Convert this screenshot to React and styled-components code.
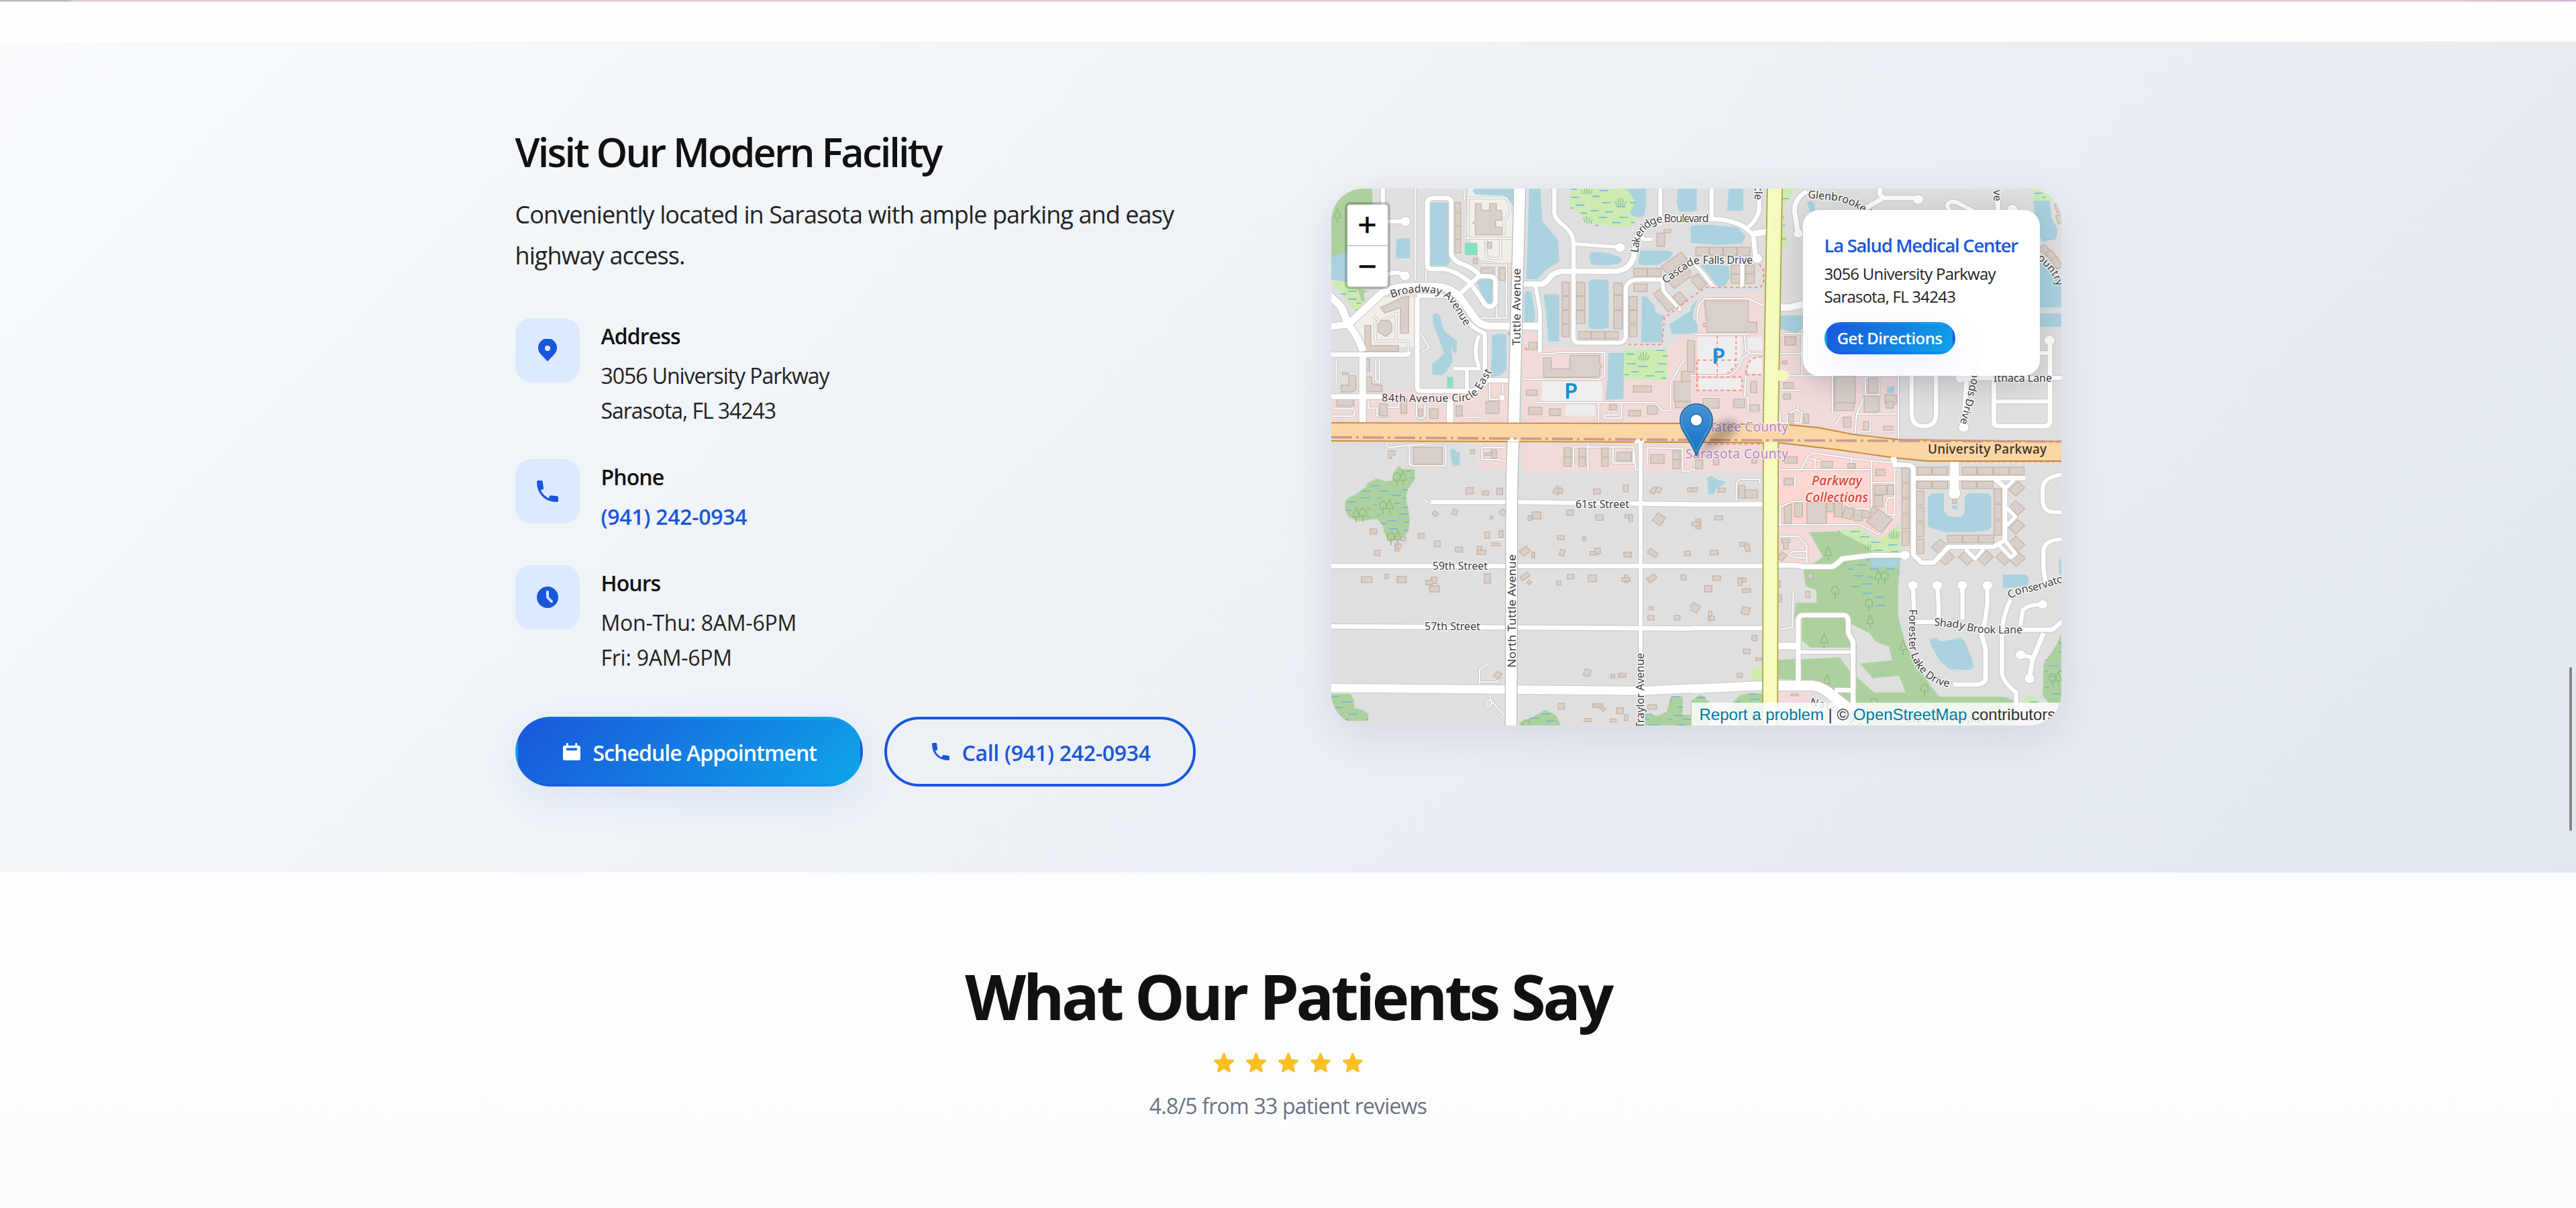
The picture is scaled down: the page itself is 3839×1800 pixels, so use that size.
import React from 'react'
import styled, { createGlobalStyle, css } from 'styled-components'

const LAND = {
    wood: '#add19e',
    marsh: '#cdebb0',
    water: '#aad3df',
    school: '#f2efe9',
    shops: '#f2dad9',
    mall: '#ffd6d1',
    plain: '#e0dfdf',
    pitch: '#88e0be',
    parking: '#eeeeee',
}

// Every tile keeps its own drawing units, [x, y, w, h] places it on the map
const tiles = [
    {
        id: 'nw',
        place: [-14, -11, 560, 400],
        box: '0 0 1568 1200',
        areas: [
            ['wood', 'M39 33H208L212 80 203 180 195 260 130 310 39 345Z'],
            ['water', 'M39 345Q70 322 105 320V450L39 440Z'],
            ['marsh', 'M39 445L100 450 160 480 150 500 172 545 160 580 135 580 90 510Z'],
            ['wood', 'M150 480L200 490 175 500 178 540 165 535Z'],
            ['school', 'M612 33H805V360L750 365 660 350 640 300 600 240 605 130Z'],
            ['school', 'M240 520H385V740L200 745 175 740 130 650Z'],
            ['shops', 'M838 680H905L910 745 1190 750 1195 770 1185 975H1258L1262 890 1440 890 1445 745 1490 690 1568 682V1085H838Z'],
            ['shops', 'M39 970H240L250 940 380 935 640 960 700 905H780V1082H39Z'],
            ['water', 'M312 262L330 255 368 255V345H308Z'],
            ['water', 'M628 40L640 34H800V120L780 80 760 65 640 60Z'],
            ['water', 'M450 95H525Q535 110 530 180V330L540 350 525 378H450Z'],
            ['water', 'M865 33H912L920 180 985 260 990 360 935 395 900 438H853Z'],
            ['water', 'M845 500L860 490 875 495 890 600 885 630H845Z'],
            ['water', 'M645 445Q690 435 714 440L710 545H690L660 490Z'],
            ['water', 'M925 505H990V717H945L935 580Z'],
            ['water', 'M1113 450L1125 440H1190L1197 450V650L1180 660H1120L1113 650Z'],
            ['water', 'M1120 318Q1180 310 1240 338L1256 350 1236 370 1176 378 1125 373 1115 345Z'],
            ['water', 'M1328 310H1440L1467 320 1450 345 1400 375 1330 375 1320 365Z'],
            ['water', 'M1335 515H1355L1390 560V580L1405 595 1433 600 1418 635 1423 695 1410 720H1333Z'],
            ['water', 'M1450 640L1568 560V682H1490L1460 685Z'],
            ['water', 'M462 600Q480 580 492 600L510 670 565 715 562 770 550 765 540 730 545 810 520 850 500 868 462 865 458 820 490 790 510 770 490 710 465 640Z'],
            ['water', 'M710 690L740 680 770 685V845L740 870 705 875Z'],
            ['water', 'M1195 768H1263L1258 973 1183 978 1193 878Z'],
            ['water', 'M1270 33H1351V120L1345 155 1320 163 1290 153 1280 120Z'],
            ['water', 'M1485 33H1568V138L1488 135 1480 90Z'],
            ['water', 'M1540 195H1568V285L1538 275Z'],
            ['marsh', 'M1040 33H1270L1308 90 1290 130 1280 145 1310 165 1300 200 1240 205 1130 190 1085 155 1030 110Z'],
            ['marsh', 'M1262 752H1443L1440 890 1330 885 1258 880Z'],
            ['pitch', 'M597 275H649V330H597ZM522 875H548V923H522Z'],
            ['parking', 'M918 895H1170V983H918ZM1018 998H1140V1048H1018Z'],
        ],
        ripples: 'M78 504h26M110 492h36M108 527h36M145 546h18M140 576h18M1040 36h24M1160 42h34M1040 72h34M1130 68h30M1060 107h36M1170 96h36M1285 96h24M1230 114h36M1120 132h36M1035 120h12M1180 137h34M1080 143h28M1155 162h36M1240 162h36M1140 198h16M1210 185h36M1290 185h16M1274 773h30M1395 756h36M1422 782h20M1272 816h38M1402 816h36M1320 828h38M1290 852h32M1390 852h36M1262 864h20M1350 870h36M1415 880h22',
        grass: 'M1090 58l-6-18M1098 58l-3-26M1105 58v-28M1112 58l4-28M1120 58l8-20M1230 110l-6-20M1238 112l-4-34M1246 112v-40M1254 112l4-34M1262 110l8-22M1098 185l-6-22M1106 188l-3-32M1114 188l2-26M1122 190l6-20M1326 800l-6-20M1334 802l-4-34M1342 802v-40M1350 802l4-34M1358 800l8-22',
        lanes: 'M390 33V440M435 380V470M595 40V90M610 75H770L785 110V140L760 170V255H610ZM785 140H805M600 255H805M685 260V325Q690 345 710 345H745V262M730 380V610M590 530Q605 590 640 612H770V375H665M220 640L310 590V715H225ZM300 715H360V770M215 600L250 640M225 800V890L240 902V800M412 680L448 745 412 768M838 885H1160L1180 870V765H990L960 772 910 770M890 990H1390L1420 1025H1455V900L1510 800M1155 990V1080M1250 990V1060H1180V1045H1235M195 985V1015H230V1050H270V1010H320V990M50 1018H130V980M45 1050H135V1020M395 990V1050L412 1062 430 1050V1000M600 1055H670M700 905V975H755M755 905V950M60 790V900',
        streets: [
            ['M255 33V110', 18],
            ['M270 180H348M270 420Q310 395 347 423', 18],
            ['M655 430V420Q645 395 590 372Q545 355 540 325V100Q540 75 515 75H465Q440 75 440 100V375Q440 393 460 393H510Q560 400 620 455L680 550Q700 570 718 553L725 540V450Q725 430 705 425H655L580 500', 20],
            ['M20 500L80 560 110 640L250 500Q300 470 380 470H480Q555 478 590 540L640 615Q660 645 700 648H905', 32],
            ['M20 652L110 640Q150 690 172 760', 30],
            ['M20 775H350Q362 775 362 762', 20],
            ['M170 770V1082M535 975V1082', 28],
            ['M20 963H260', 22],
            ['M398 520V920Q398 938 415 938H620Q660 930 690 890H800', 20],
            ['M398 512H500Q560 520 590 600Q620 655 680 680V890', 18],
            ['M655 690Q630 760 655 830M550 838H660M605 838V930', 16],
            ['M838 460H920Q940 450 955 425Q975 405 1010 403H1225Q1290 395 1303 330L1310 260Q1330 190 1420 170H1568', 24],
            ['M970 33V145Q975 170 1005 195Q1050 230 1050 280V700Q1050 722 1075 722H1240Q1268 720 1268 690V480Q1275 440 1320 440H1420', 18],
            ['M1050 280L1245 295M1330 225L1340 260H1380', 16],
            ['M892 470L910 580V765', 16],
            ['M1412 33V195', 16],
            ['M1420 440L1425 490 1495 575', 16],
        ],
        ends: [[348, 180, 20], [347, 423, 20], [1245, 297, 20], [752, 967, 12]],
        walks: 'M1568 500L1430 610 1418 730H1280M1555 740V1085M848 745l12 14M838 1085H1568M780 675V690',
        blocks: [
            [555, 95, 24, 45], [555, 140, 24, 60], [555, 200, 24, 60], [555, 260, 24, 60],
            [1002, 452, 30, 60], [1002, 515, 30, 60], [1002, 578, 30, 60], [1002, 640, 30, 55],
            [1062, 452, 35, 60], [1062, 515, 35, 60], [1062, 578, 35, 58],
            [1072, 672, 52, 33], [1126, 672, 54, 33], [1183, 672, 54, 33],
            [1218, 455, 35, 52], [1218, 510, 35, 65], [1218, 578, 35, 82],
            [1283, 515, 32, 60], [1283, 578, 32, 55], [1283, 640, 32, 55],
            [1302, 390, 55, 35], [1360, 390, 55, 35], [1302, 460, 55, 33],
            [663, 388, 53, 24], [740, 388, 26, 55], [690, 272, 18, 28], [633, 345, 16, 25],
            [685, 985, 54, 53], [560, 1005, 25, 45], [450, 1018, 35, 42], [403, 1018, 16, 33],
            [330, 975, 24, 63], [240, 995, 32, 54], [62, 975, 70, 30], [862, 1010, 55, 33],
            [950, 1018, 45, 30], [1300, 915, 75, 28], [1200, 1000, 30, 22], [1280, 1025, 50, 25],
            [1358, 1005, 42, 36], [1470, 895, 98, 90], [1500, 850, 68, 45], [1525, 712, 30, 140],
            [1475, 985, 80, 28], [853, 933, 45, 25], [863, 720, 35, 32], [1398, 232, 33, 60],
            [1428, 215, 28, 16], [183, 795, 16, 55], [85, 855, 25, 10],
            [1418, 345, 105, 42, -38], [1448, 415, 100, 38, -38], [1378, 515, 100, 36, 52],
            [1470, 505, 48, 38, 50], [1555, 410, 40, 60],
        ],
        shapes: 'M640 100h25v30h35v-30h28v30h22v45h-25v30h25v35H640v-45l-10-8 10-8ZM925 790h32v48h78v-60h125v40l8 10-8 10v32l-12 6H925ZM245 565L335 520 362 515V680H328V565L262 590ZM180 645h24v90h115v25H180ZM235 640l15-18h30l12 20v30l-25 22-32-20ZM112 870h30v60l-15 12H80v-30h32ZM183 875h25v30l42 8v28h-68Z',
        trees: [[65, 155]],
    },
    {
        id: 'ne',
        place: [536, -11, 570, 400],
        box: '0 0 1568 1200',
        areas: [
            ['water', 'M0 33H24V130L0 138ZM155 33H215V133H148Z'],
            ['water', 'M0 200Q60 190 120 200L190 205 225 245 210 280 100 285 0 275Z'],
            ['water', 'M40 375Q100 365 155 380L160 430 140 470H110L75 420Z'],
            ['shops', 'M0 680L30 640 20 590 60 510 295 500V1180H0Z'],
            ['water', 'M0 560L30 525 10 580 8 610 28 640V675L0 682Z'],
            ['shops', 'M365 665L430 680 460 650V660H850V1160H365Z'],
            ['water', 'M365 600H470V650L430 678 365 660Z'],
            ['water', 'M475 95Q490 80 505 100L510 140H490Z'],
            ['marsh', 'M378 33H432L398 90 375 120V290L395 295 400 270 385 230Z'],
            ['marsh', 'M1405 33H1480L1490 87H1405Z'],
            ['water', 'M1405 87H1472L1478 160 1505 220 1495 260 1440 270 1410 200Z'],
            ['water', 'M1425 360L1480 400 1518 450V565H1425ZM1425 592H1530V650H1425ZM805 920l30-5v32h-32Z'],
            ['parking', 'M28 695H208V800L150 860H28ZM232 698H292V755H232ZM245 790H292V860H230ZM32 882H210V932H32Z'],
        ],
        ripples: 'M372 78h30M372 162h10M375 198h12M370 258h20M1410 54h30M1440 72h14M1460 54h8',
        lanes: 'M20 685H230L245 660M220 690L225 755 245 770H295M365 770H455M365 870H455V785M225 870L220 960 235 970V1030H295M25 610L30 560 55 525H235L295 555M40 965H130M0 870H150Q200 850 210 790L240 770M365 690L385 682H455V870H850V1155M580 870V1035M672 1130L680 1040 715 955V880H770V955H712M770 955V1040H845M680 1040H770M370 935H450M365 1035V1080H450L455 1035 430 1020 395 1045V1080M440 1020V1000M590 1090L620 1040M700 1120H735V1060M785 1120H830V1090',
        streets: [
            ['M85 33V170', 18],
            ['M-10 170H110Q170 175 220 205L255 240 265 340', 20],
            ['M235 205Q285 160 280 100V33', 18],
            ['M255 235L315 225', 28],
            ['M0 350L40 400 95 475M210 370V475', 16],
            ['M475 45Q420 80 425 140L440 235', 20],
            ['M690 135L790 75 930 75M775 33V60L790 75', 20],
            ['M1065 140L1050 110Q1055 85 1090 95L1160 135', 18],
            ['M1258 80V140', 20],
            ['M360 565H400L460 550', 30],
            ['M905 860V1040Q905 1095 955 1095Q1005 1095 1005 1040V860', 18],
            ['M1100 880H1240M1130 880L1118 1100M1242 880V1075Q1242 1095 1265 1095H1450Q1472 1095 1472 1075V715', 20],
            ['M1242 985H1470M1242 880H1530M1430 768H1470', 18],
        ],
        ends: [[272, 345, 20], [440, 235, 18], [932, 82, 20], [1318, 125, 20], [1105, 880, 20], [1118, 1100, 20], [1470, 712, 21]],
        walks: 'M0 520L60 475H285L298 450V400L280 370M108 690V870M185 690V820L150 860M25 800H200M20 875H210V935H25V800M225 860Q230 780 295 785M225 865H295',
        blocks: [
            [20, 295, 54, 38], [76, 295, 54, 38], [134, 295, 54, 38], [190, 295, 52, 38],
            [165, 375, 35, 40], [165, 415, 35, 42], [225, 375, 35, 40], [225, 415, 35, 42],
            [245, 895, 25, 50], [50, 970, 65, 45], [175, 975, 45, 38], [240, 1000, 40, 28],
            [385, 695, 45, 38], [380, 952, 28, 22], [380, 900, 40, 25], [400, 1040, 20, 40],
            [463, 1042, 20, 40], [588, 870, 85, 125], [588, 990, 80, 35], [727, 880, 40, 68],
            [710, 960, 60, 72], [795, 955, 48, 40], [800, 985, 30, 30], [625, 1055, 30, 45], [708, 1075, 22, 40],
            [790, 1095, 38, 20], [-10, 715, 25, 140], [375, 803, 18, 14],
            [0, 430, 60, 40, 50], [1440, 285, 28, 50, -45], [1465, 310, 28, 50, -35],
            [1485, 340, 28, 50, -30], [1495, 100, 22, 40, -20], [1500, 150, 22, 40, -15],
        ],
        shapes: 'M55 535H235V630H270V675H65V650H50V635H65Z',
        trees: [],
    },
    {
        id: 'sw',
        place: [-14, 379, 560, 440],
        box: '0 0 1568 1320',
        areas: [
            ['shops', 'M650 0H770V118H650ZM835 0H1568V130H835Z'],
            ['water', 'M535 32L550 25 562 40H577L574 100 548 105 540 80Z'],
            ['wood', 'M97 265Q100 245 140 230L180 200 190 180 230 158 265 172 295 168 300 130 320 102 335 118H387V165L360 205 350 240 368 340 362 390 335 435H275L258 395 255 370 230 340 150 350 110 330 97 295Z'],
            ['wood', 'M30 1122H120L135 1150V1185L175 1195 195 1215 192 1243H100L30 1262Z'],
            ['wood', 'M825 1250L880 1225 935 1192 980 1220 1002 1275H825Z'],
            ['wood', 'M1348 1205L1400 1220 1440 1200 1455 1135H1505V1215H1568V1275H1348ZM1548 1160V1145L1568 1135V1160Z'],
        ],
        ripples: 'M352 126h18M374 156h12M202 192h40M166 216h36M240 216h40M336 210h22M290 234h40M162 246h40M230 246h18M340 246h12M104 264h42M302 270h28M218 276h12M100 300h28M190 294h12M336 288h22M320 318h38M190 330h10M230 324h14M274 348h40M246 360h24M342 354h22M280 384h38M342 390h14M40 1134h28M84 1158h40M52 1182h38M112 1212h38M184 1236h8M96 1236h14M918 1212h34M868 1230h40M936 1242h36M1460 1134h36M1450 1152h12M1484 1182h24M1366 1212h12M1468 1218h38M1350 1236h14M1446 1236h16M1508 1236h40M1366 1260h40M1480 1260h36',
        lanes: 'M270 0V14L285 20 365 10V95Q375 103 390 103H510Q518 100 518 85V10M360 12L430 5M668 20V75H735L770 85M668 20H760M1050 110V18H1300L1310 120H1330M1215 20V90H1300V30M1110 0V125M1357 95V22L1505 25V125H1550V20M658 1080V1015L700 980M658 1068H730L745 1042H770M700 1120L705 1150 770 1228M705 1150Q680 1150 688 1175Q705 1180 710 1160M710 435L740 430 770 437M425 255L450 268',
        streets: [
            ['M455 264H780L1570 275', 20],
            ['M20 550H1570', 20],
            ['M20 820L1570 830', 20],
            ['M20 1095L800 1103 1340 1108 1570 1095', 38],
            ['M1330 0V1275', 16],
        ],
        ends: [],
        walks: '',
        blocks: [
            [382, 20, 120, 75], [620, 30, 16, 18], [707, 32, 22, 36], [680, 44, 30, 12],
            [1010, 22, 30, 42], [1010, 64, 30, 40], [1072, 22, 28, 42], [1072, 64, 28, 40],
            [1167, 22, 28, 42], [1167, 64, 28, 40], [1232, 42, 60, 38], [1372, 52, 56, 40],
            [1465, 35, 30, 40], [1465, 75, 30, 40],
            [602, 200, 30, 28], [670, 215, 26, 18], [730, 202, 24, 28], [1134, 206, 28, 22],
            [1258, 188, 20, 30], [1526, 200, 40, 18], [970, 195, 24, 34, 30], [985, 205, 20, 20],
            [1375, 198, 20, 30, 40], [1395, 198, 20, 24, 20],
            [463, 308, 20, 18, 45], [545, 298, 20, 24, 20], [742, 300, 24, 22, 45], [702, 328, 12, 12],
            [878, 308, 36, 32], [860, 325, 14, 22], [1022, 300, 26, 24], [1142, 322, 32, 24], [1265, 320, 30, 16],
            [1282, 320, 14, 32], [1387, 320, 40, 42, 35], [1545, 355, 24, 24],
            [202, 384, 28, 22], [402, 404, 24, 22], [332, 420, 18, 18], [305, 445, 16, 38], [312, 452, 20, 18],
            [220, 480, 22, 24], [468, 438, 26, 26], [557, 466, 30, 22], [648, 462, 18, 36], [650, 480, 34, 18],
            [680, 398, 20, 28], [740, 392, 16, 30], [710, 447, 32, 12],
            [983, 414, 28, 18], [1088, 418, 12, 20], [828, 470, 38, 28, -40], [876, 488, 12, 26],
            [992, 478, 20, 26, 20], [1118, 485, 34, 16], [1140, 470, 22, 24], [1260, 488, 32, 22],
            [1360, 482, 42, 20, 35], [1514, 484, 24, 20],
            [165, 598, 44, 26], [263, 587, 14, 20], [314, 596, 38, 28], [455, 600, 24, 28], [434, 614, 28, 20],
            [450, 638, 40, 28], [678, 585, 26, 42], [828, 586, 38, 20, -35], [858, 616, 14, 14, 45],
            [980, 618, 18, 18], [1024, 588, 28, 20], [1112, 590, 34, 30], [1262, 590, 14, 34], [1252, 602, 34, 16],
            [1358, 594, 38, 22, -38], [1498, 590, 22, 22],
            [1366, 732, 18, 14], [1360, 772, 26, 20], [1470, 772, 24, 20], [1540, 715, 28, 36],
            [722, 1024, 24, 28, 40], [1094, 1012, 26, 30, 15], [1206, 1036, 16, 14], [1238, 1030, 30, 18],
            [986, 1164, 26, 26], [1130, 1166, 40, 16], [1160, 1180, 22, 14, 45], [1230, 1184, 28, 26], [1262, 1215, 16, 26],
            [1094, 1232, 30, 14], [1202, 1234, 26, 14], [1360, 1170, 36, 20],
        ],
        shapes: 'M278 35H305V55H292V70H278Z',
        trees: [[338, 158], [283, 285], [143, 322], [317, 425]],
        rounds: [[312, 158], [255, 285], [171, 318], [288, 425], [852, 1262]],
    },
    {
        id: 'se',
        place: [536, 379, 570, 440],
        box: '0 0 1568 1320',
        areas: [
            ['shops', 'M0 0H295V130H0Z'],
            ['shops', 'M355 5L640 35 835 70 850 100 860 360 770 435 700 380 485 400 540 500 475 540H355Z'],
            ['mall', 'M365 20L650 55 835 85V325L770 410 690 365H365Z'],
            ['wood', 'M485 400L610 395 720 400 860 500 850 640V780L880 900 930 1000 985 1090 1020 1135H1290L1330 1155V1275H650L590 1110 440 1060 355 1055V970L430 965 418 840 430 715H515V660L470 640 462 570 540 510Z'],
            ['plain', 'M418 785H455V960H418ZM640 800L730 850 760 890 812 910 825 972 700 985 745 1052 853 1040 880 1115H750L680 1045V900ZM440 915H670V1050L610 958 440 968ZM455 885L490 915H455Z'],
            ['wood', 'M693 988L780 978 745 1052 720 1020Z'],
            ['marsh', 'M605 395L690 380 770 435 857 362V488H750L710 455Z'],
            ['water', 'M735 518H858V555H745Z'],
            ['water', 'M65 155L85 148 110 165 142 172 132 188 107 200 92 228H72Z'],
            ['water', 'M972 240L987 225H1037V295Q1042 328 1070 330H1110Q1122 320 1122 290V245L1137 225H1217L1231 240V378L1215 392 1140 398H1040L972 375Z'],
            ['water', 'M975 875L1005 872 1025 888 1105 870 1122 885 1150 960 1161 1000 1145 1015 1060 1012 1025 980 990 920Z'],
            ['water', 'M1278 588H1375L1385 605 1380 640 1278 650ZM1508 520H1518V590H1510ZM1070 280h24v16h-24Z'],
            ['wood', 'M1518 850L1500 900 1445 990 1442 1130 1475 1175H1518Z'],
            ['marsh', 'M1350 1165L1370 1138 1400 1125 1440 1165ZM248 1010L293 998V1062H248Z'],
            ['wood', 'M-10 1160L40 1125 78 1160 75 1275H-10ZM170 1160L205 1125 295 1118V1275H200Z'],
            ['shops', 'M355 1112H480L495 1140 420 1175H355Z'],
        ],
        ripples: 'M604 396h8M654 396h38M694 420h38M738 444h36M808 456h38M748 480h38M820 486h32M720 522h16M626 540h12M682 546h38M640 564h22M732 564h38M798 564h38M848 580h6M666 594h38M726 600h22M704 630h38M656 642h36M704 672h38M754 690h38M758 726h40M1506 894h12M1508 936h10M1452 972h10M1468 996h38M1450 1020h14M1508 1020h10M1470 1044h24M1450 1092h18M1480 1122h36M1388 1158h36M24 1138h36M236 1122h36M242 1146h38M186 1158h18',
        grass: 'M818 425l-6-18M825 428l-4-32M832 428v-38M840 428l4-32M848 425l5-22M718 478l-4-20M726 480v-34M732 478l5-24',
        lanes: 'M0 120H15V80M185 260L188 175 200 162H280L285 185M190 262H285M355 120H740V80L835 90M740 120V290M835 85V325L770 410 690 365H355M740 178H835M800 320V265L810 245H835M800 320H835M365 370V285L420 262 620 260 660 295H740M450 120L480 60 500 45 660 70 740 80M508 70V118M478 65L540 85V100M658 70V90M427 145V210M360 418H440L475 460V540M475 485H420Q405 490 405 500Q410 515 475 515M420 665L415 825 355 835',
        streets: [
            ['M-10 275H295M-10 550H295M-10 828H295', 20],
            ['M-10 1100L295 1085', 40],
            ['M355 1085H500Q540 1090 580 1130L650 1190', 44],
            ['M590 1105H660', 20],
            ['M355 908H440', 30],
            ['M440 1070V785Q445 770 460 770H630Q645 775 645 800V850L665 890V1200', 20],
            ['M440 935H660', 16],
            ['M355 547H430L460 553H580Q595 545 620 518L740 502H870', 22],
            ['M835 70V98H885Q912 100 912 125V500L945 535H995L1055 465H1240L1287 435V200L1245 160', 20],
            ['M912 157H1370', 20],
            ['M1080 80V225', 38],
            ['M1287 205L1325 165M1295 290L1330 330 1295 370M1287 435L1330 495 1312 512 1262 455M1125 475L1165 518 1200 475', 16],
            ['M1530 140Q1445 150 1442 200V260Q1445 310 1490 310H1530', 18],
            ['M1530 430Q1450 430 1445 480V560L1455 630', 18],
            ['M910 640L915 760M1010 640L1015 720V780M1113 640V790M1215 640V720L1205 800', 18],
            ['M920 800H1010M1205 800L1192 860 1208 920V1050Q1205 1080 1170 1080H1075', 20],
            ['M1310 700Q1275 780 1275 860V1030Q1280 1070 1333 1115V1175', 18],
            ['M1350 820L1360 750Q1370 725 1440 722M1352 947L1400 960', 18],
            ['M1300 835H1480Q1500 820 1530 790M1445 850L1400 970 1388 1050', 20],
        ],
        ends: [[877, 502, 20], [1080, 225, 24], [910, 637, 20], [1010, 637, 20], [1113, 637, 20], [1215, 637, 20], [1442, 722, 19], [1388, 1053, 20], [1352, 947, 20]],
        walks: 'M70 5H295M1105 84H1530',
        blocks: [
            [18, 75, 30, 40], [92, 68, 22, 30], [250, 68, 20, 22], [385, 62, 50, 28], [535, 82, 45, 28], [643, 92, 32, 20],
            [757, 118, 38, 28], [382, 158, 36, 30], [425, 268, 32, 62], [475, 268, 80, 92], [556, 268, 30, 40],
            [588, 268, 32, 62], [668, 300, 36, 48], [752, 190, 50, 42], [805, 188, 26, 42], [752, 235, 34, 50],
            [700, 305, 36, 30, 20], [735, 310, 75, 75, 38], [625, 290, 40, 48, 15], [738, 288, 24, 22, 40],
            [927, 108, 60, 35], [990, 108, 62, 35], [1112, 108, 58, 35], [1174, 108, 64, 35], [1240, 108, 64, 35], [1306, 108, 60, 35],
            [927, 172, 60, 32], [990, 172, 62, 32], [1112, 172, 58, 32], [1174, 172, 64, 32],
            [865, 112, 30, 62], [865, 180, 30, 64], [865, 250, 30, 64], [865, 322, 30, 62], [865, 394, 30, 64],
            [925, 215, 30, 64], [925, 288, 30, 62], [925, 358, 30, 62], [925, 430, 30, 64],
            [1243, 205, 30, 64], [1243, 275, 30, 66], [1243, 348, 30, 64],
            [1052, 412, 60, 34], [1115, 412, 62, 34], [1180, 412, 62, 34],
            [1310, 185, 52, 40, -45], [1310, 270, 52, 40, 45], [1310, 355, 52, 40, -45], [1310, 430, 52, 40, 45], [1312, 500, 52, 40, -45],
            [992, 442, 52, 40, -45], [1022, 494, 52, 40, -45], [1102, 494, 52, 40, 45], [1182, 494, 52, 40, -45], [1256, 494, 52, 40, 45],
            [2, 200, 24, 18], [112, 202, 28, 18], [195, 190, 26, 56], [222, 210, 50, 36],
            [98, 326, 32, 18], [20, 340, 20, 44], [5, 354, 30, 18], [200, 445, 28, 16], [222, 452, 18, 34, -15], [78, 480, 34, 20],
            [88, 594, 34, 20], [56, 638, 30, 28], [194, 604, 32, 18], [194, 604, 16, 34], [210, 652, 34, 16],
            [0, 720, 34, 34, 30], [208, 734, 32, 32, 15], [72, 752, 14, 42], [76, 774, 20, 20],
            [250, 860, 20, 24], [214, 922, 28, 20], [266, 960, 24, 12], [190, 1030, 20, 18],
            [372, 430, 34, 16], [380, 445, 18, 30], [360, 490, 26, 34, 35], [482, 584, 16, 22], [470, 664, 18, 26],
            [355, 615, 12, 28], [355, 680, 16, 30], [410, 1122, 30, 8], [1073, 252, 16, 18],
        ],
        shapes: 'M382 290L412 270V360H382Z',
        trees: [[563, 495], [546, 885], [735, 800], [768, 600], [870, 915], [558, 1068], [1506, 1055]],
        rounds: [[591, 665], [794, 600], [730, 722], [958, 1102], [1483, 1055], [750, 1165]],
    },
]

// id, baseline, width, text
const curvedLabels = [
    ['broadway', 'M90 163Q115 153 143 155T180 174L201 208', 134, 'Broadway Avenue'],
    ['circle', 'M75 317Q140 319 198 317Q214 313 222 302L240 272', 186, '84th Avenue Circle East'],
    ['lakeridge', 'M457 96L460 76Q467 57 487 51L500 50H570', 134, 'Lakeridge Boulevard'],
    ['cascade', 'M498 142L533 117Q541 112 552 112H630', 139, 'Cascade Falls Drive'],
    ['glenbrooke', 'M710 14L752 18Q775 22 796 38L812 50', 110, 'Glenbrooke Dr'],
    ['country', 'M1043 99Q1064 112 1076 132L1084 150', 62, 'Country'],
    ['woods', 'M954 258V285L936 354', 94, 'Woods Drive'],
    ['forester', 'M861 627V680Q864 705 880 722Q898 742 932 744', 146, 'Forester Lake Drive'],
    ['shady', 'M898 651L936 655Q955 662 985 663H1036', 133, 'Shady Brook Lane'],
    ['conserve', 'M1013 612Q1022 602 1048 600L1110 580', 98, 'Conservatory'],
    ['nature', 'M713 770L745 777 800 815', 100, 'Nature Encl'],
]

// x, y, turn, width, text, size
const straightLabels = [
    [282, 234, -90, 115, 'Tuttle Avenue', 17],
    [275, 714, -90, 169, 'North Tuttle Avenue', 17],
    [466, 804, -90, 112, 'Traylor Avenue', 16],
    [364, 476, 0, 80, '61st Street', 16],
    [151, 568, 0, 82, '59th Street', 16],
    [139, 658, 0, 83, '57th Street', 16],
    [987, 288, 0, 87, 'Ithaca Lane', 16],
    [631, -23, 90, 40, 'Circle', 16],
    [987, -21, 90, 40, 'Drive', 16],
    [858, 796, 0, 110, 'DeSoto Road', 17],
]

const Tile = ({ tile }) => {
    const [x, y, w, h] = tile.place
    return (
        <svg x={x} y={y} width={w} height={h} viewBox={tile.box} preserveAspectRatio="none">
            <rect width="1568" height="1320" fill={LAND.plain} />
            {tile.areas.map(([kind, d], i) => <path key={i} d={d} fill={LAND[kind]} />)}
            <path d={tile.ripples} stroke="#6cb4e0" strokeWidth="5" fill="none" />
            {tile.grass && <path d={tile.grass} stroke="#8dc491" strokeWidth="4" fill="none" />}
            {tile.trees.map(([tx, ty], i) => (
                <path key={i} d={`M${tx} ${ty - 32}l-15 40h30ZM${tx} ${ty + 8}v25`} fill="none" stroke="#8fb982" strokeWidth="4" />
            ))}
            {(tile.rounds || []).map(([tx, ty], i) => (
                <path key={i} d={`M${tx} ${ty - 24}c-20 4-20 36 0 38c20-2 20-34 0-38M${tx} ${ty}v34`} fill="none" stroke="#8fb982" strokeWidth="4" />
            ))}
            <path d={tile.lanes} fill="none" stroke="#c9c5c3" strokeWidth="12" strokeLinejoin="round" />
            <path d={tile.lanes} fill="none" stroke="#fbfbfb" strokeWidth="6" strokeLinejoin="round" />
            <g fill="#d9d0c9" stroke="#c7b5a8" strokeWidth="4">
                {tile.blocks.map(([bx, by, bw, bh, turn], i) => (
                    <rect key={i} x={bx} y={by} width={bw} height={bh} transform={turn ? `rotate(${turn} ${bx + bw / 2} ${by + bh / 2})` : undefined} />
                ))}
                <path d={tile.shapes} />
            </g>
            <g fill="none" stroke="#cbc8c6" strokeLinejoin="round">
                {tile.streets.map(([d, size], i) => <path key={i} d={d} strokeWidth={size + 6} />)}
                {tile.ends.map(([cx, cy, r], i) => <circle key={i} cx={cx} cy={cy} r={r + 1} strokeWidth="4" />)}
            </g>
            <g fill="none" stroke="#fff" strokeLinejoin="round">
                {tile.streets.map(([d, size], i) => <path key={i} d={d} strokeWidth={size} />)}
                {tile.ends.map(([cx, cy, r], i) => <circle key={i} cx={cx} cy={cy} r={r} fill="#fff" stroke="none" />)}
            </g>
            <path d={tile.walks} fill="none" stroke="#fa8376" strokeWidth="5" strokeDasharray="13 12" />
        </svg>
    )
}

const StreetMap = () => (
    <MapCanvas viewBox="0 0 1088 800">
        <defs>
            <linearGradient id="pin" x1="0" y1="0" x2="0" y2="1">
                <stop offset="0" stopColor="#4494d3" />
                <stop offset="1" stopColor="#126fc6" />
            </linearGradient>
            <filter id="soft" x="-50%" y="-50%" width="200%" height="200%">
                <feGaussianBlur stdDeviation="6" />
            </filter>
        </defs>
        {tiles.map(tile => <Tile key={tile.id} tile={tile} />)}

        <path d="M281 -5L272 349M271 377L269 440 268 805" stroke="#bdb9b7" strokeWidth="19" fill="none" />
        <path d="M281 -5L272 352M271 374L269 440 268 805" stroke="#fff" strokeWidth="16.5" fill="none" />
        <path d="M-5 349L546 350 681 352 725 356 776 366 845 374 1095 377V406H888L838 401 754 389 670 379 546 378 250 377-5 376Z" fill="#fcd6a4" stroke="#c48d35" strokeWidth="1.8" />
        <path d="M262 377.5L266 372H276L281 377.5ZM452 379V374H466V379ZM834 400H842V408H834Z" fill="#fff" />
        <path d="M661 -5L655 340V360L654 805" stroke="#a9a53c" strokeWidth="24" fill="none" />
        <path d="M661 -5L655 340V360L654 805" stroke="#f7fabf" strokeWidth="20.5" fill="none" />
        <path d="M664 271Q682 268 682 278T664 286Z" fill="#f7fabf" />
        <path d="M640 352.500H670V377.500H640Z" fill="#fcd6a4" />
        <path d="M0 370.500L546 374.500 1088 377" stroke="#c79c94" strokeWidth="3.600" strokeDasharray="31 6 4 6" fill="none" />

        <MapLabels>
            {curvedLabels.map(([id, d, width, text]) => (
                <g key={id}>
                    <path id={id} d={d} fill="none" stroke="none" />
                    <text fontSize="16" textLength={width}>
                        <textPath href={`#${id}`} textLength={width}>{text}</textPath>
                    </text>
                </g>
            ))}
            {straightLabels.map(([x, y, turn, width, text, size]) => (
                <text key={text} fontSize={size} textLength={width} lengthAdjust="spacingAndGlyphs" transform={`translate(${x} ${y}) rotate(${turn})`}>{text}</text>
            ))}
            <g fontSize="19" fill="#b389b5" stroke="#f6e6e8">
                <text x="531" y="362" textLength="150">Manatee County</text>
                <text x="528" y="402" textLength="153">Sarasota County</text>
            </g>
            <text x="889" y="395" fontSize="19" textLength="177" fill="#3a3127" stroke="#fcd6a4" fontWeight="500">University Parkway</text>
            <g fontSize="19" fontStyle="italic" fontWeight="500" fill="#d9473e" stroke="#ffe6e3">
                <text x="716" y="442" textLength="75">Parkway</text>
                <text x="706" y="467" textLength="94">Collections</text>
            </g>
            <g fontSize="33" fontWeight="600" fill="#0a92da" stroke="none">
                <text x="347" y="313">P</text>
                <text x="567" y="261">P</text>
            </g>
        </MapLabels>

        <path d="M544 399L570 358Q590 336 604 350Q612 362 580 380Z" fill="#000" opacity=".26" filter="url(#soft)" />
        <path d="M544 398.500C542 390 534 377 529 369C523 359 520 354 520 345A24 24 0 0 1 568 345C568 354 565 359 559 369C554 377 546 390 544 398.500Z" fill="url(#pin)" stroke="#2a6a9d" strokeWidth="2" />
        <path d="M544 392C541 384 535 374 531 367C525 358 522 353 522 345A22 22 0 0 1 566 345C566 353 563 358 557 367C553 374 547 384 544 392Z" fill="none" stroke="#5fa5da" strokeWidth="1.500" opacity=".7" />
        <circle cx="544" cy="345" r="9" fill="#fff" stroke="#2f74ab" strokeWidth="1.800" />
    </MapCanvas>
)

const PinIcon = () => (
    <svg width="32" height="34" viewBox="0 0 32 34" fill="currentColor">
        <path fillRule="evenodd" d="M16 33.500L5.500 22.500A14 14 0 1 1 26.500 22.500ZM16 10a4 4 0 1 0 0 8a4 4 0 0 0 0-8Z" />
    </svg>
)

const PhoneIcon = ({ size = 32 }) => (
    <svg width={size} height={size} viewBox="0 0 32 32" fill="currentColor">
        <path d="M2 0H7Q8.600 0 8.800 1.600L10 11.500Q10.200 13 8.800 13.400L5.600 14.200Q9.500 22.500 17.800 26.400L19 23.600Q19.600 22.100 21.200 22.200L30.400 23.300Q32 23.500 32 25V30.200Q32 32 30 32Q16.500 32 8.500 24Q0 15.500 0 2Q0 0 2 0Z" />
    </svg>
)

const ClockIcon = () => (
    <svg width="32" height="32" viewBox="0 0 32 32">
        <circle cx="16" cy="16" r="16" fill="currentColor" />
        <path d="M16 8V16L22 22.300" fill="none" stroke="#dbeafe" strokeWidth="3.800" strokeLinecap="round" strokeLinejoin="round" />
    </svg>
)

const CalendarIcon = () => (
    <svg width="26" height="26" viewBox="0 0 26 26" fill="currentColor">
        <path fillRule="evenodd" d="M2.600 4H4.800V1.200Q4.800 0 6.300 0T7.800 1.200V4H18.200V1.200Q18.200 0 19.700 0T21.200 1.200V4H23.400Q26 4 26 6.600V23.300Q26 26 23.400 26H2.600Q0 26 0 23.300V6.600Q0 4 2.600 4ZM6 7.500Q4.800 7.500 4.800 9.200T6 11.200H20Q21.200 11.200 21.200 9.300T20 7.500Z" />
    </svg>
)

const StarIcon = () => (
    <svg width="40" height="40" viewBox="0 0 40 40">
        <path d="M20 5.300L23.800 14.900 33.300 15.700 26.200 21.900 28.300 31 20 26.100 11.700 31 13.800 21.900 6.700 15.700 16.200 14.900Z" fill="#fbbf24" stroke="#fbbf24" strokeWidth="3.200" strokeLinejoin="round" />
    </svg>
)

const App = () => {
    return (
        <>
            <GlobalStyle />
            <StyledPage>
                <StyledStrip />
                <StyledFacility>
                    <StyledContainer>
                        <div>
                            <StyledHeading>Visit Our Modern Facility</StyledHeading>
                            <StyledLead>
                                <span>Conveniently located in Sarasota with ample parking and easy</span>
                                <span>highway access.</span>
                            </StyledLead>
                            <StyledInfoList>
                                <StyledInfo $track="-1.05px">
                                    <StyledBadge><PinIcon /></StyledBadge>
                                    <div>
                                        <h3>Address</h3>
                                        <p>3056 University Parkway</p>
                                        <p>Sarasota, FL 34243</p>
                                    </div>
                                </StyledInfo>
                                <StyledInfo>
                                    <StyledBadge><PhoneIcon /></StyledBadge>
                                    <div>
                                        <h3>Phone</h3>
                                        <StyledPhone href="#call">(941) 242-0934</StyledPhone>
                                    </div>
                                </StyledInfo>
                                <StyledInfo $track="-.25px">
                                    <StyledBadge><ClockIcon /></StyledBadge>
                                    <div>
                                        <h3>Hours</h3>
                                        <p>Mon-Thu: 8AM-6PM</p>
                                        <p>Fri: 9AM-6PM</p>
                                    </div>
                                </StyledInfo>
                            </StyledInfoList>
                            <StyledActions>
                                <StyledButton $primary $width="518px" $track="-.95px">
                                    <i><CalendarIcon /></i>
                                    <span>Schedule Appointment</span>
                                </StyledButton>
                                <StyledButton $width="464px" $track="-.3px">
                                    <i><PhoneIcon size={26} /></i>
                                    <span>Call (941) 242-0934</span>
                                </StyledButton>
                            </StyledActions>
                        </div>
                        <StyledMap>
                            <StreetMap />
                            <StyledZoom>
                                <button>+</button>
                                <button>−</button>
                            </StyledZoom>
                            <StyledPlace>
                                <h4>La Salud Medical Center</h4>
                                <p>3056 University Parkway</p>
                                <p>Sarasota, FL 34243</p>
                                <StyledDirections>Get Directions</StyledDirections>
                            </StyledPlace>
                            <StyledCredit>
                                <a href="#report">Report a problem</a> | © <a href="#osm">OpenStreetMap</a> contributors
                            </StyledCredit>
                        </StyledMap>
                    </StyledContainer>
                </StyledFacility>
                <StyledReviews>
                    <h2>What Our Patients Say</h2>
                    <StyledStars>
                        {[1, 2, 3, 4, 5].map(star => <StarIcon key={star} />)}
                    </StyledStars>
                    <p>4.8/5 from 33 patient reviews</p>
                </StyledReviews>
                <StyledScrollThumb />
            </StyledPage>
        </>
    )
}

const GlobalStyle = createGlobalStyle`
    * {
        margin: 0;
        padding: 0;
        box-sizing: border-box;
    }

    body {
        font-family: "Open Sans", "Noto Sans", sans-serif;
        font-size: 32px;
        line-height: 1.6;
        color: #222;
        background: #fdfeff;
        overflow: hidden;
    }

    a {
        text-decoration: none;
    }
`

const StyledPage = styled.div`
    height: 1800px;
    overflow: hidden;
`

const StyledStrip = styled.div`
    height: 62px;
    background:
        linear-gradient(90deg, #d9d0dc 0 100px, #fde0e4 110px, #fdeadf 300px, #fdeadf 3600px, #fbd3ea 3780px, #ddc8fa) 0 0 / 100% 1px no-repeat,
        linear-gradient(90deg, #8f8a94 0 100px, #b5a19f 110px, #b5a19f 3600px, #b890a8) 0 1px / 100% 1px no-repeat,
        #fefefe;
`

const StyledFacility = styled.section`
    height: 1238px;
    padding: 128px 0;
    background: linear-gradient(135deg, #f8fafc, #e2e8f0);
`

const StyledContainer = styled.div`
    width: 2304px;
    margin: 0 auto;
    display: grid;
    grid-template-columns: 1fr 1fr;
    gap: 128px;
    align-items: center;
`

const StyledHeading = styled.h2`
    height: 97px;
    font-size: 59.5px;
    line-height: 72px;
    font-weight: 600;
    letter-spacing: -2.85px;
    color: #111;
`

const StyledLead = styled.p`
    height: 187px;
    padding-top: 2px;
    font-size: 36px;
    line-height: 61px;
    letter-spacing: -.9px;

    span {
        display: block;
    }
`

const StyledInfoList = styled.div`
    display: flex;
    flex-direction: column;
    gap: 46px;
`

const StyledInfo = styled.div`
    display: flex;
    gap: 32px;

    h3 {
        height: 60px;
        padding-top: 1px;
        font-size: 32px;
        line-height: 51px;
        font-weight: 600;
        letter-spacing: -.9px;
        color: #111;
    }

    p {
        line-height: 52px;
        letter-spacing: ${props => props.$track};
    }
`

const StyledBadge = styled.div`
    width: 96px;
    height: 96px;
    border-radius: 24px;
    background: #dbeafe;
    color: #1a56db;
    display: flex;
    align-items: center;
    justify-content: center;
`

const StyledPhone = styled.a`
    display: block;
    line-height: 52px;
    font-weight: 600;
    letter-spacing: -.3px;
    color: #1a56db;
`

const StyledActions = styled.div`
    display: flex;
    gap: 32px;
    margin-top: 62px;
`

const accentFill = css`
    color: #fff;
    border: 4px solid transparent;
    background: linear-gradient(135deg, #1a56db, #0ea5e9);
    box-shadow: 0 16px 64px rgba(26, 86, 219, .1);
`

const StyledButton = styled.button`
    width: ${props => props.$width};
    height: 104px;
    padding: 0 64px;
    display: flex;
    align-items: center;
    gap: 16px;
    font-family: inherit;
    font-size: 32px;
    font-weight: 600;
    letter-spacing: ${props => props.$track};
    white-space: nowrap;
    border: 4px solid #1a56db;
    border-radius: 52px;
    background: transparent;
    color: #1a56db;
    ${props => props.$primary && accentFill}

    i {
        width: 32px;
        flex: none;
        display: flex;
        justify-content: center;
    }

    span {
        padding-top: 2px;
    }
`

const StyledMap = styled.div`
    position: relative;
    height: 800px;
    border-radius: 48px;
    overflow: hidden;
    box-shadow: 0 16px 64px rgba(15, 23, 42, .1);
`

const MapCanvas = styled.svg`
    display: block;
    width: 1088px;
    height: 800px;
`

const MapLabels = styled.g`
    font-family: "Noto Sans", sans-serif;
    fill: #3c3c3c;
    stroke: rgba(255, 255, 255, .75);
    stroke-width: 3px;
    stroke-linejoin: round;
    paint-order: stroke;
`

const StyledZoom = styled.div`
    position: absolute;
    left: 20px;
    top: 20px;
    border: 4px solid rgba(0, 0, 0, .2);
    border-radius: 8px;
    background-clip: padding-box;
    overflow: hidden;

    button {
        display: block;
        width: 60px;
        height: 60px;
        border: 0;
        background: #fff;
        color: #000;
        font: 400 48px/60px "Liberation Sans", Arial, sans-serif;
        -webkit-text-stroke: .6px #000;
    }

    button:first-child {
        height: 62px;
        border-bottom: 2px solid #ccc;
    }
`

const StyledPlace = styled.div`
    position: absolute;
    top: 32px;
    right: 32px;
    width: 353px;
    height: 247px;
    padding: 33px 32px;
    border-radius: 24px;
    background: rgba(255, 255, 255, .98);
    box-shadow: 0 8px 48px rgba(15, 23, 42, .18);
    white-space: nowrap;

    h4 {
        height: 45px;
        font-size: 27.5px;
        line-height: 39px;
        font-weight: 600;
        letter-spacing: -1.3px;
        color: #1a56db;
    }

    p {
        font-size: 24px;
        line-height: 34px;
        letter-spacing: -.78px;
    }
`

const StyledDirections = styled.button`
    ${accentFill}
    display: block;
    width: 195px;
    height: 48px;
    margin-top: 21px;
    border-radius: 24px;
    font: 600 24px/40px "Open Sans", sans-serif;
    letter-spacing: -.6px;
`

const StyledCredit = styled.div`
    position: absolute;
    right: 0;
    bottom: 0;
    width: 551px;
    height: 34px;
    padding-left: 12px;
    background: rgba(255, 255, 255, .82);
    font: 24px/35px "Liberation Sans", Arial, sans-serif;
    color: #333;
    white-space: nowrap;

    a {
        color: #0078a8;
    }
`

const StyledReviews = styled.section`
    height: 500px;
    padding-top: 128px;
    text-align: center;
    background: linear-gradient(#fcfdff, #fbfcfe);

    h2 {
        height: 108px;
        padding-top: 3px;
        font-size: 94px;
        line-height: 106px;
        font-weight: 700;
        letter-spacing: -4.4px;
        color: #111;
    }

    p {
        color: #6b7280;
        letter-spacing: -.8px;
    }
`

const StyledStars = styled.div`
    display: flex;
    justify-content: center;
    gap: 8px;
    height: 40px;
    margin: 29px 0 17px;
`

const StyledScrollThumb = styled.div`
    position: fixed;
    top: 994px;
    right: 6px;
    width: 4px;
    height: 244px;
    border-radius: 2px;
    background: #858585;
`

export default App
